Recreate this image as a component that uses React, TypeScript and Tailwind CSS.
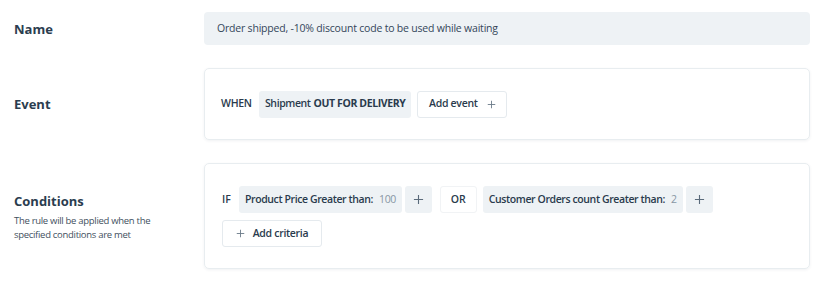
import React from 'react';

const Plus: React.FC<{ className?: string }> = ({ className }) => (
  <svg viewBox="0 0 12 12" className={className} fill="none" stroke="currentColor" strokeWidth="1.2">
    <path d="M6 1v10M1 6h10" />
  </svg>
);

const Label: React.FC<{ title: string; children?: React.ReactNode }> = ({ title, children }) => (
  <div className="w-[204px] shrink-0 pl-[14px]">
    <h3 className="text-[13px] font-bold text-[#2b3d4f] leading-[18px]">{title}</h3>
    {children}
  </div>
);

const Chip: React.FC<{ children: React.ReactNode }> = ({ children }) => (
  <div className="h-[27px] bg-[#eef2f5] rounded-[3px] flex items-center px-[6px] font-semibold tracking-[-0.4px] whitespace-nowrap">
    {children}
  </div>
);

const PlusBox: React.FC = () => (
  <div className="ml-[3px] h-[27px] w-[27px] bg-[#eef2f5] rounded-[3px] flex items-center justify-center">
    <Plus className="w-[11px] h-[11px] text-[#5b6b7b]" />
  </div>
);

const App: React.FC = () => {
  return (
    <div
      className="w-[830px] h-[287px] bg-white text-[#2a3b4d] pt-[12px]"
      style={{ fontFamily: '"Open Sans", "Noto Sans", sans-serif' }}
    >
      {/* Name */}
      <div className="flex items-center pr-[20px]">
        <Label title="Name" />
        <div className="flex-1 h-[33px] bg-[#eef2f5] rounded-[4px] flex items-center px-[13px] text-[10.5px] tracking-[-0.2px] text-[#34465a]">
          Order shipped, -10% discount code to be used while waiting
        </div>
      </div>

      {/* Event */}
      <div className="flex items-center pr-[20px] mt-[23px]">
        <Label title="Event" />
        <div className="flex-1 h-[72px] rounded-[5px] border border-[#e8edf0] shadow-[0_1px_3px_rgba(40,60,80,0.07)] flex items-center pl-[16px] text-[10.5px]">
          <span className="font-semibold tracking-[-0.3px] w-[38px]">WHEN</span>
          <Chip>
            Shipment<span className="ml-[3px] font-bold">OUT FOR DELIVERY</span>
          </Chip>
          <button className="ml-[6px] h-[27px] w-[90px] border border-[#e5eaee] rounded-[3px] flex items-center justify-center gap-[9px] font-semibold tracking-[-0.3px]">
            Add event
            <Plus className="w-[9px] h-[9px] text-[#6b7a89]" />
          </button>
        </div>
      </div>

      {/* Conditions */}
      <div className="flex items-start pr-[20px] mt-[23px]">
        <div className="pt-[29px]">
          <Label title="Conditions">
            <p className="mt-[4px] text-[9.5px] tracking-[-0.3px] leading-[14px] text-[#3f5060] w-[152px]">
              The rule will be applied when the specified conditions are met
            </p>
          </Label>
        </div>
        <div className="flex-1 h-[106px] rounded-[5px] border border-[#e8edf0] shadow-[0_1px_3px_rgba(40,60,80,0.07)] pl-[17px] pt-[22px] text-[10.5px]">
          <div className="flex items-center">
            <span className="font-semibold w-[17px]">IF</span>
            <Chip>
              Product Price Greater than:<span className="ml-[6px] font-normal text-[#8896a4]">100</span>
            </Chip>
            <PlusBox />
            <div className="ml-[8px] mr-[6px] h-[27px] w-[37px] border border-[#f1f3f5] rounded-[3px] flex items-center justify-center font-semibold">
              OR
            </div>
            <Chip>
              Customer Orders count Greater than:<span className="ml-[6px] font-normal text-[#8896a4]">2</span>
            </Chip>
            <PlusBox />
          </div>
          <button className="mt-[7px] h-[27px] w-[100px] border border-[#e5eaee] rounded-[3px] flex items-center justify-center gap-[8px] font-semibold tracking-[-0.3px]">
            <Plus className="w-[9px] h-[9px] text-[#6b7a89]" />
            Add criteria
          </button>
        </div>
      </div>
    </div>
  );
};

export default App;
